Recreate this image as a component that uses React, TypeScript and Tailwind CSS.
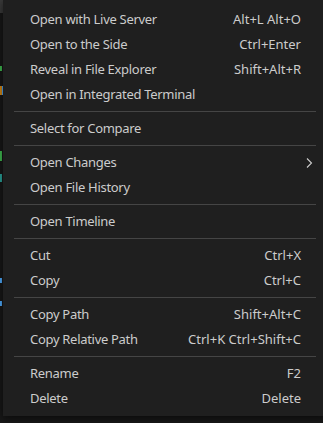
import React from "react";

type Item = { label: string; key?: string; sub?: boolean } | "sep";

const items: Item[] = [
  { label: "Open with Live Server", key: "Alt+L Alt+O" },
  { label: "Open to the Side", key: "Ctrl+Enter" },
  { label: "Reveal in File Explorer", key: "Shift+Alt+R" },
  { label: "Open in Integrated Terminal" },
  "sep",
  { label: "Select for Compare" },
  "sep",
  { label: "Open Changes", sub: true },
  { label: "Open File History" },
  "sep",
  { label: "Open Timeline" },
  "sep",
  { label: "Cut", key: "Ctrl+X" },
  { label: "Copy", key: "Ctrl+C" },
  "sep",
  { label: "Copy Path", key: "Shift+Alt+C" },
  { label: "Copy Relative Path", key: "Ctrl+K Ctrl+Shift+C" },
  "sep",
  { label: "Rename", key: "F2" },
  { label: "Delete", key: "Delete" },
];

export default function App() {
  return (
    <div
      className="w-[323px] h-[423px] overflow-hidden bg-[#181818] flex"
      style={{ fontFamily: '"Noto Sans", "Open Sans", sans-serif' }}
    >
      <div className="w-[3px] shrink-0 h-full flex">
        <div className="w-[2px] h-full bg-[linear-gradient(to_bottom,#3a3a3a_0,#3a3a3a_13px,transparent_13px,transparent_66px,#3fb950_66px,#3fb950_71px,transparent_71px,transparent_86px,#d18616_86px,#d18616_95px,transparent_95px,transparent_151px,#3fb950_151px,#3fb950_161px,transparent_161px,transparent_174px,#2aa198_174px,#2aa198_182px,transparent_182px,transparent_278px,#4daafc_278px,#4daafc_283px,transparent_283px,transparent_301px,#4daafc_301px,#4daafc_306px,transparent_306px)]" />
        <div className="w-[1px] h-full bg-[linear-gradient(to_bottom,#3a3a3a_0,#3a3a3a_13px,transparent_13px,transparent_86px,#4daafc_86px,#4daafc_95px,transparent_95px)]" />
      </div>
      <div className="w-[324px] shrink-0 h-[416px] bg-[#1f1f1f] pt-[7px] pb-[5px] shadow-[0_2px_8px_rgba(0,0,0,0.6)] text-[13px] text-[#cccccc]">
        {items.map((it, i) =>
          it === "sep" ? (
            <div key={i} className="h-[9px] flex items-center mx-[11px]">
              <div className="h-px w-full bg-[#454545]" />
            </div>
          ) : (
            <div key={i} className="h-[25px] flex items-center gap-[4px] pl-[27px] pr-[14px]">
              <span className="flex-1 whitespace-nowrap tracking-[-0.3px]">{it.label}</span>
              {it.key && <span className="whitespace-nowrap">{it.key}</span>}
              {it.sub ? (
                <svg
                  width="8"
                  height="12"
                  viewBox="0 0 8 12"
                  fill="none"
                  stroke="#cccccc"
                  strokeWidth="1.1"
                  className="shrink-0"
                >
                  <path d="M2 1.5 L6.5 6 L2 10.5" />
                </svg>
              ) : (
                <span className="w-[8px] shrink-0" />
              )}
            </div>
          )
        )}
      </div>
    </div>
  );
}
